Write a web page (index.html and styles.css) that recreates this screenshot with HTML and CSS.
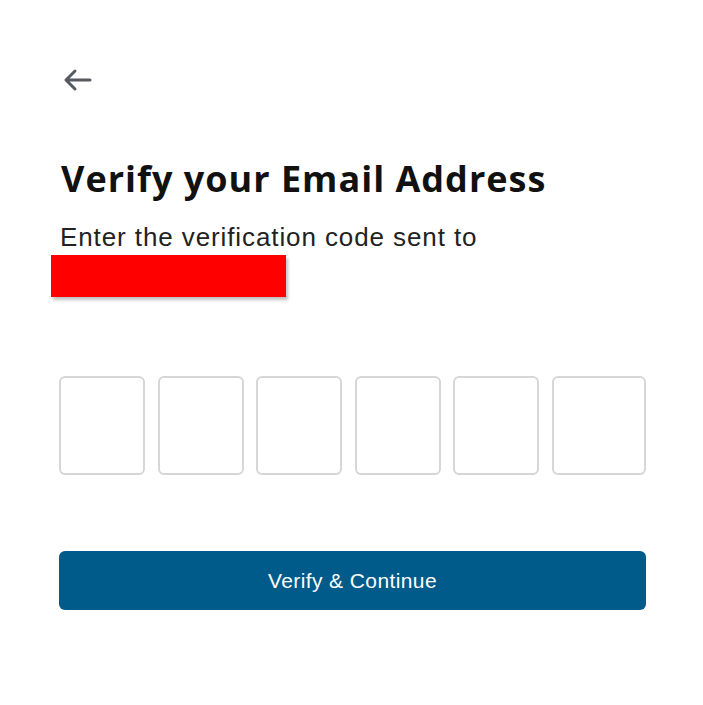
FILE: index.html
```html
<!DOCTYPE html>
<html>
<head>
<meta charset="utf-8">
<link rel="stylesheet" href="styles.css">
</head>
<body>
<main class="card">
  <button class="back" aria-label="Back">
    <svg width="30" height="24" viewBox="0 0 30 24"><path d="M28 12H4M13 3L4 12l9 9" fill="none" stroke="#555b61" stroke-width="3" stroke-linecap="round" stroke-linejoin="round"/></svg>
  </button>
  <h1 class="title">Verify your Email Address</h1>
  <p class="subtitle">Enter the verification code sent to</p>
  <div class="redact"></div>
  <div class="codes">
    <input class="code" maxlength="1">
    <input class="code" maxlength="1">
    <input class="code" maxlength="1">
    <input class="code" maxlength="1">
    <input class="code" maxlength="1">
    <input class="code last" maxlength="1">
  </div>
  <button class="submit">Verify &amp; Continue</button>
</main>
</body>
</html>
```

FILE: styles.css
```css
html, body { margin: 0; padding: 0; background: #fff; }
.card {
  width: 587px;
  padding: 68px 0 0 59px;
  display: flex;
  flex-direction: column;
}
.back {
  align-self: flex-start;
  background: none;
  border: 0;
  padding: 0;
  margin: 0 0 0 3px;
  width: 30px;
  height: 24px;
  cursor: pointer;
}
.back svg { display: block; }
.title {
  font-family: "Open Sans", sans-serif;
  font-weight: 700;
  font-size: 36px;
  color: #111;
  margin: 66px 0 0 2px;
  line-height: 42px;
  letter-spacing: 1px;
}
.subtitle {
  font-family: "Liberation Sans", Arial, sans-serif;
  font-size: 26px;
  letter-spacing: 0.9px;
  color: #222;
  margin: 22px 0 0 1px;
  line-height: 30px;
}
.redact {
  width: 235px;
  height: 42px;
  background: #ff0000;
  margin: 3px 0 0 -8px;
  box-shadow: 2px 3px 3px rgba(0,0,0,0.25);
}
.codes {
  display: flex;
  gap: 12.6px;
  margin-top: 79px;
}
.code {
  box-sizing: border-box;
  width: 86px;
  height: 99px;
  border: 2px solid #d6d6d6;
  border-radius: 6px;
  background: #fff;
  margin: 0;
  padding: 0;
}
.code.last { flex: 1; }
.submit {
  margin-top: 76px;
  height: 59px;
  width: 587px;
  background: #005b8a;
  border: 0;
  border-radius: 6px;
  color: #fff;
  font-family: "Liberation Sans", Arial, sans-serif;
  font-size: 21px;
  letter-spacing: 0.4px;
  cursor: pointer;
}
```
